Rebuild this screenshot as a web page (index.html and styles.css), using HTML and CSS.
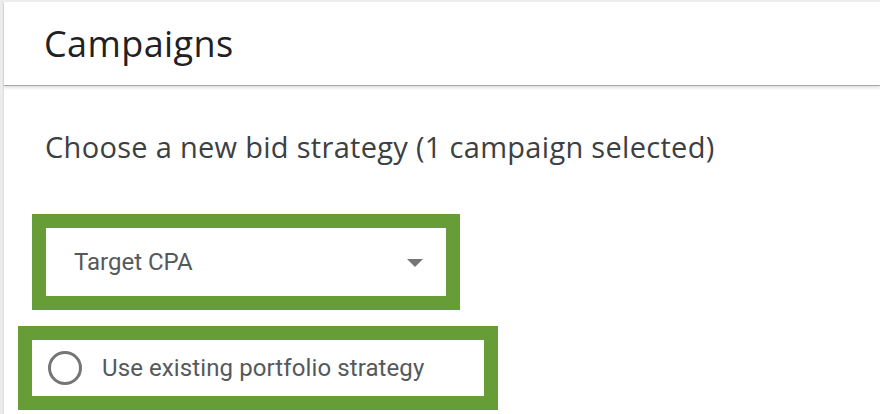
FILE: index.html
```html
<!DOCTYPE html>
<html>
<head>
<meta charset="utf-8">
<link rel="stylesheet" href="styles.css">
</head>
<body>
<div class="page">
  <header class="header">
    <h1 class="title">Campaigns</h1>
  </header>
  <main class="content">
    <h2 class="subtitle">Choose a new bid strategy (1 campaign selected)</h2>
    <div class="hl hl-select">
      <div class="select">
        <span class="select-label">Target CPA</span>
        <svg class="caret" width="16" height="8" viewBox="0 0 16 8"><path d="M0 0 L16 0 L8 8 Z" fill="#757575"/></svg>
      </div>
    </div>
    <div class="hl hl-radio">
      <div class="radio-row">
        <span class="radio"></span>
        <span class="radio-label">Use existing portfolio strategy</span>
      </div>
    </div>
  </main>
</div>
</body>
</html>
```
FILE: styles.css
```css
html, body {
  margin: 0;
  padding: 0;
  background: #ececec;
  height: 100%;
  overflow: hidden;
}
.page {
  margin: 2px 0 0 3px;
  background: #ffffff;
  height: 412px;
  border-left: 1px solid #dedede;
}
.header {
  height: 83px;
  border-bottom: 1px solid #a8a8a8;
  box-shadow: 0 2px 3px rgba(0,0,0,0.12);
  display: flex;
  align-items: center;
  padding-left: 40px;
}
.title {
  margin: 0;
  font-family: "Open Sans", sans-serif;
  font-weight: 400;
  font-size: 36px;
  letter-spacing: 0.4px;
  line-height: 49px;
  color: #202124;
}
.content {
  padding-top: 45px;
}
.subtitle {
  margin: 0 0 0 41px;
  font-family: "Open Sans", sans-serif;
  font-weight: 400;
  font-size: 29px;
  letter-spacing: 0.3px;
  line-height: 32px;
  color: #3c4043;
  white-space: nowrap;
}
.hl {
  border: 14px solid #679d37;
  box-sizing: border-box;
  background: #fff;
}
.hl-select {
  margin: 51px 0 0 28px;
  width: 428px;
  height: 96px;
}
.select {
  height: 100%;
  display: flex;
  align-items: center;
  padding: 0 23px 0 28px;
  justify-content: space-between;
}
.select-label {
  font-family: Roboto, sans-serif;
  font-size: 24px;
  color: #55595d;
}
.caret {
  display: block;
  margin-top: 1px;
}
.hl-radio {
  margin: 16px 0 0 14px;
  width: 480px;
  height: 84px;
}
.radio-row {
  height: 100%;
  display: flex;
  align-items: center;
  padding-left: 16px;
}
.radio {
  width: 28px;
  height: 28px;
  border: 3px solid #757575;
  border-radius: 50%;
  flex: none;
}
.radio-label {
  margin-left: 20px;
  font-family: Roboto, sans-serif;
  font-size: 24px;
  letter-spacing: 0.1px;
  color: #55595d;
}
```
